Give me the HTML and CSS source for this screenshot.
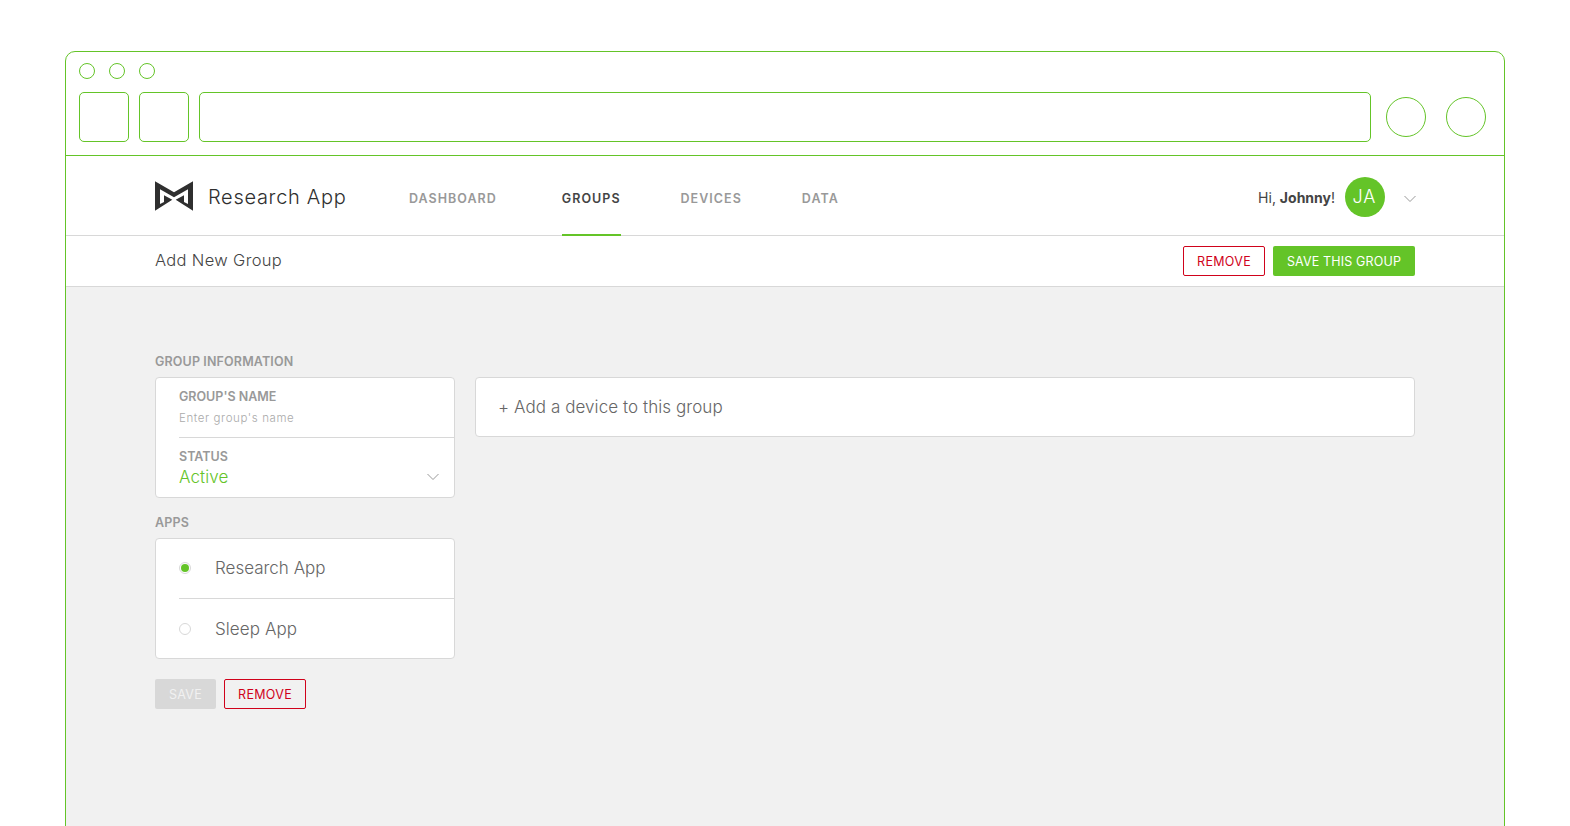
FILE: index.html
```html
<!DOCTYPE html>
<html lang="en">
<head>
<meta charset="utf-8">
<title>Research App</title>
<link rel="stylesheet" href="styles.css">
</head>
<body>
<div class="browser">
  <div class="chrome">
    <div class="dots"><i></i><i></i><i></i></div>
    <div class="toolbar"><i class="box"></i><i class="box"></i><i class="url"></i><i class="round"></i><i class="round"></i></div>
  </div>
  <header class="header">
    <svg class="logo" viewBox="0 0 38 30"><path d="M0 .3 19 11.300 38 .3V29.700L20.700 18.700 29 14.200V21L33 23V8.300L19 16.300 5 8.300V23L9 21V14.200L17.300 18.700 0 29.700Z"/></svg>
    <div class="brand">Research App</div>
    <nav class="nav">
      <a>DASHBOARD</a>
      <a class="active">GROUPS</a>
      <a>DEVICES</a>
      <a>DATA</a>
    </nav>
    <div class="greeting">Hi, <b>Johnny</b>!</div>
    <div class="avatar">JA</div>
    <svg class="chevron" viewBox="0 0 12 8"><path d="M.5 1 6 6.500 11.500 1"/></svg>
  </header>
  <div class="subbar">
    <h1>Add New Group</h1>
    <a class="btn danger">REMOVE</a>
    <a class="btn primary">SAVE THIS GROUP</a>
  </div>
  <main class="main">
    <section class="side">
      <h2>GROUP INFORMATION</h2>
      <div class="card">
        <div class="row field">
          <label>GROUP'S NAME</label>
          <div class="placeholder">Enter group's name</div>
        </div>
        <div class="row field">
          <label>STATUS</label>
          <div class="value">Active<svg class="chevron" viewBox="0 0 12 8"><path d="M.5 1 6 6.500 11.500 1"/></svg></div>
        </div>
      </div>
      <h2 class="apps">APPS</h2>
      <div class="card">
        <div class="row option"><i class="radio on"></i>Research App</div>
        <div class="row option"><i class="radio"></i><span>Sleep App</span></div>
      </div>
      <div class="actions">
        <a class="btn disabled">SAVE</a>
        <a class="btn danger">REMOVE</a>
      </div>
    </section>
    <section class="card devices">+ Add a device to this group</section>
  </main>
</div>
</body>
</html>
```
FILE: styles.css
```css
* { box-sizing: border-box; margin: 0; padding: 0; }
body { height: 826px; overflow: hidden; background: #fff; font-family: Inter, "Liberation Sans", sans-serif; color: #444; }
i { display: block; font-style: normal; }

.browser { width: 1440px; height: 800px; margin: 51px 0 0 65px; border: 1px solid #64c428; border-radius: 10px 10px 0 0; overflow: hidden; }
.chrome { height: 104px; padding: 11px 18px 0 13px; border-bottom: 1px solid #64c428; }
.chrome i { border: 1px solid #64c428; flex: none; }
.dots { display: flex; gap: 14px; }
.dots i { width: 16px; height: 16px; border-radius: 50%; }
.toolbar { display: flex; align-items: center; gap: 10px; margin-top: 13px; }
.toolbar .box { width: 50px; height: 50px; border-radius: 5px; }
.toolbar .url { width: 1172px; height: 50px; border-radius: 5px; }
.toolbar .round { width: 40px; height: 40px; border-radius: 50%; margin-left: 5px; }
.toolbar .round + .round { margin-left: 10px; }

.header { height: 80px; display: flex; align-items: flex-start; padding: 0 88px 0 89px; border-bottom: 1px solid #d8d8d8; }
.logo { width: 38px; height: 30px; margin-top: 25px; fill: #2f2f2f; }
.brand { width: 200px; margin: 29px 0 0 15px; font-size: 20px; line-height: 24px; font-weight: 300; letter-spacing: .7px; color: #2f2f2f; }
.nav { display: flex; gap: 60px; margin-left: 1px; }
.nav a { height: 80px; padding-top: 35px; font-size: 12.5px; line-height: 16px; font-weight: 600; letter-spacing: 1.03px; color: #999; }
.nav .active { margin-left: 5px; color: #444; border-bottom: 2px solid #64c428; }
.greeting { margin: 33px 0 0 auto; font-size: 14px; line-height: 18px; }
.avatar { width: 40px; height: 40px; margin: 21px 19px 0 10px; padding-right: 1px; border-radius: 50%; background: #64c428; color: #fff; font-size: 18px; line-height: 39px; font-weight: 300; letter-spacing: 1px; text-align: center; }
.chevron { width: 12px; height: 8px; fill: none; stroke: #999; stroke-width: 1; }
.header .chevron { margin-top: 39px; }

.subbar { height: 51px; display: flex; align-items: center; gap: 8px; padding: 0 89px; border-bottom: 1px solid #d8d8d8; }
h1 { margin: 0 auto 2px 0; font-size: 16.5px; line-height: 20px; font-weight: 300; letter-spacing: .33px; }
.btn { height: 30px; padding-top: 1px; border-radius: 2px; display: flex; align-items: center; justify-content: center; font-size: 12.5px; letter-spacing: .3px; }
.danger { width: 82px; padding-top: 0; border: 1px solid #d0021b; color: #d0021b; }
.primary { width: 142px; background: #64c428; color: #fff; letter-spacing: .15px; }
.disabled { width: 61px; background: #d8d8d8; color: #f1f1f1; }

.main { height: 600px; display: flex; gap: 20px; padding: 66px 89px; background: #f1f1f1; }
.side { width: 300px; }
h2, label { display: block; padding-top: 1px; font-size: 12.5px; line-height: 16px; font-weight: 600; color: #999; }
h2 { letter-spacing: .14px; }
.card { background: #fff; border: 1px solid #d8d8d8; border-radius: 4px; }
.side .card { height: 121px; margin-top: 7px; padding-left: 23px; }
.row { height: 60px; }
.row:first-child { border-bottom: 1px solid #d8d8d8; }
.field { padding-top: 10px; }
.placeholder { margin-top: 5px; font-size: 11.5px; line-height: 16px; font-weight: 300; letter-spacing: .6px; color: #aaa; }
.value { display: flex; justify-content: space-between; align-items: center; margin-top: 2px; padding-right: 15px; font-size: 17px; line-height: 20px; font-weight: 300; letter-spacing: .1px; color: #64c428; }
.option { display: flex; align-items: center; padding-bottom: 1px; font-size: 17px; font-weight: 300; color: #666; }
.option span { letter-spacing: .08px; }
.radio { width: 12px; height: 12px; margin-right: 24px; border: 1px solid #d8d8d8; border-radius: 50%; }
.radio.on { padding: 1px; background: #64c428 content-box; }
.option:last-child .radio { margin-top: 1px; }
.apps { margin-top: 16px; }
.actions { display: flex; gap: 8px; margin-top: 20px; }
.devices { width: 940px; height: 60px; margin-top: 24px; padding-left: 22px; font-size: 17px; line-height: 58px; font-weight: 300; letter-spacing: .07px; color: #666; }
```
